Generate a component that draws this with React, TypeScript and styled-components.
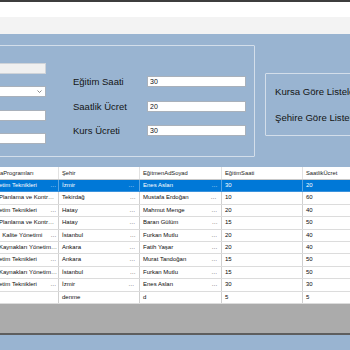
import React from 'react';
import styled, {createGlobalStyle} from 'styled-components';

// WinForms-style "kurs" form: field groups on top, data grid below.

const GlobalStyle = createGlobalStyle`
  html, body {
    margin: 0;
    padding: 0;
    width: 350px;
    height: 350px;
    overflow: hidden;
    background: #99b4d1;
    font-family: 'Liberation Sans', Arial, sans-serif;
  }
`;

// ── Window chrome ──────────────────────────────────────────────────

const Window = styled.div`
  display: flex;
  flex-direction: column;
  width: 350px;
  height: 350px;
  background: #99b4d1;
  overflow: hidden;
`;

const TopEdge = styled.div`
  height: 2px;
  background: #3e3e3e;
  flex-shrink: 0;
`;

const TitleBar = styled.div`
  height: 15px;
  background: #ffffff;
  flex-shrink: 0;
`;

const MenuStrip = styled.div`
  height: 17px;
  background: #f3f3f3;
  flex-shrink: 0;
`;

const Content = styled.div`
  display: flex;
  flex-direction: column;
  padding-top: 11px;
`;

// ── Group boxes ────────────────────────────────────────────────────

const TopRow = styled.div`
  display: flex;
  align-items: flex-start;
  gap: 10px;
`;

const GroupBox = styled.div`
  box-sizing: border-box;
  flex-shrink: 0;
  border: 1px solid #d3deea;
  border-radius: 1px;
`;

const FieldsGroup = styled(GroupBox)`
  display: flex;
  margin-left: -10px;
  width: 265px;
  height: 112px;
  padding-left: 5px;
`;

const ListGroup = styled(GroupBox)`
  display: flex;
  flex-direction: column;
  gap: 15px;
  margin-top: 28px;
  width: 130px;
  height: 63px;
  padding: 12px 0 0 9px;
`;

const LeftFields = styled.div`
  display: flex;
  flex-direction: column;
  gap: 12.4px;
  width: 50px;
  flex-shrink: 0;
  padding-top: 17px;
`;

const TextBox = styled.input<{$muted?: boolean; $width?: number}>`
  box-sizing: border-box;
  display: block;
  width: ${p => p.$width ?? 50}px;
  height: 11px;
  margin: 0;
  padding: 0 2px;
  border: 1px solid ${p => (p.$muted ? '#cfd3d8' : '#a9b1bb')};
  background: ${p => (p.$muted ? '#f0f0f0' : '#ffffff')};
  font-family: 'Liberation Sans', Arial, sans-serif;
  font-size: 7px;
  color: #111;
  outline: none;
`;

const ComboBox = styled.div`
  box-sizing: border-box;
  display: flex;
  align-items: center;
  justify-content: flex-end;
  width: 50px;
  height: 11px;
  padding-right: 3px;
  border: 1px solid #a9b1bb;
  background: #ffffff;
`;

const RightFields = styled.div`
  display: grid;
  grid-template-columns: 74px 99px;
  row-gap: 13.6px;
  align-items: center;
  margin-left: 27px;
  padding-top: 30px;
  align-self: flex-start;
  flex-shrink: 0;
`;

const FieldLabel = styled.span`
  font-size: 9.5px;
  color: #141414;
  white-space: nowrap;
  line-height: 11px;
`;

const ListLabel = styled(FieldLabel)`
  font-size: 9.6px;
`;

// ── Data grid ──────────────────────────────────────────────────────

const COLS = '63px 81px 82px 81px 82px';

const Grid = styled.div`
  box-sizing: border-box;
  display: flex;
  flex-direction: column;
  margin: 10px 0 0 -4px;
  width: 392px;
  height: 168px;
  background: #ababab;
  border-bottom: 2px solid #5e5e5e;
`;

const HeaderRow = styled.div`
  display: grid;
  grid-template-columns: ${COLS};
  height: 13px;
  box-sizing: border-box;
  background: #ffffff;
  border-bottom: 1px solid #c9c9c9;
`;

const HeaderCell = styled.div`
  box-sizing: border-box;
  padding: 0 4px 0 3px;
  border-right: 1px solid #e2e2e2;
  font-size: 5.8px;
  line-height: 12px;
  color: #1a1a1a;
  white-space: nowrap;
  overflow: hidden;

  &:first-child {
    padding-left: 4px;
  }
`;

const DataRow = styled.div<{$selected?: boolean}>`
  display: grid;
  grid-template-columns: ${COLS};
  height: 12.4px;
  box-sizing: border-box;
  background: ${p => (p.$selected ? '#0078d7' : '#ffffff')};
  color: ${p => (p.$selected ? '#ffffff' : '#0c0c0c')};
  border-bottom: 1px solid ${p => (p.$selected ? '#3c93dd' : '#dcdcdc')};
`;

const Cell = styled.div<{$selected?: boolean}>`
  box-sizing: border-box;
  padding: 0 3px;
  border-right: 1px solid ${p => (p.$selected ? '#5aa5e3' : '#d0d0d0')};
  font-size: 6px;
  line-height: 11.4px;
  white-space: pre;
  overflow: hidden;
  text-overflow: ellipsis;

  &:first-child {
    padding-right: 1px;
  }
`;

// ── Data ───────────────────────────────────────────────────────────

const pad = (s: string) => s + ' '.repeat(40);

const headers = ['aProgramları', 'Şehir', 'EğitmenAdSoyad', 'EğitimSaati', 'SaatlikÜcret'];

const rows: string[][] = [
  ['etim Teknikleri', 'İzmir', 'Enes Aslan', '30', '20'],
  ['Planlama ve Kontrolü', 'Tekirdağ', 'Mustafa Erdoğan', '10', '60'],
  ['etim Teknikleri', 'Hatay', 'Mahmut Menge', '20', '40'],
  ['Planlama ve Kontrolü', 'Hatay', 'Baran Gülüm', '15', '50'],
  ['  Kalite Yönetimi', 'İstanbul', 'Furkan Mutlu', '20', '40'],
  ['Kaynakları Yönetimi', 'Ankara', 'Fatih Yaşar', '20', '40'],
  ['etim Teknikleri', 'Ankara', 'Murat Tandoğan', '15', '50'],
  ['Kaynakları Yönetimi', 'İstanbul', 'Furkan Mutlu', '15', '50'],
  ['etim Teknikleri', 'İzmir', 'Enes Aslan', '30', '30'],
];

const lastRow = ['', 'denme', 'd', '5', '5'];

const Chevron = () => (
  <svg width="5" height="3" viewBox="0 0 5 3">
    <path d="M0.5 0.5 L2.5 2.5 L4.5 0.5" fill="none" stroke="#6d6d6d" strokeWidth="0.8" />
  </svg>
);

// ── Component ──────────────────────────────────────────────────────

export default function App() {
  return (
    <>
      <GlobalStyle />
      <Window>
        <TopEdge />
        <TitleBar />
        <MenuStrip />
        <Content>
          <TopRow>
            <FieldsGroup>
              <LeftFields>
                <TextBox $muted readOnly defaultValue="" />
                <ComboBox>
                  <Chevron />
                </ComboBox>
                <TextBox readOnly defaultValue="" />
                <TextBox readOnly defaultValue="" />
              </LeftFields>
              <RightFields>
                <FieldLabel>Eğitim Saati</FieldLabel>
                <TextBox $width={99} readOnly defaultValue="30" />
                <FieldLabel>Saatlik Ücret</FieldLabel>
                <TextBox $width={99} readOnly defaultValue="20" />
                <FieldLabel>Kurs Ücreti</FieldLabel>
                <TextBox $width={99} readOnly defaultValue="30" />
              </RightFields>
            </FieldsGroup>
            <ListGroup>
              <ListLabel>Kursa Göre Listele</ListLabel>
              <ListLabel>Şehire Göre Listele</ListLabel>
            </ListGroup>
          </TopRow>

          <Grid>
            <HeaderRow>
              {headers.map(h => (
                <HeaderCell key={h}>{h}</HeaderCell>
              ))}
            </HeaderRow>
            {rows.map((r, i) => (
              <DataRow key={i} $selected={i === 0}>
                {r.map((v, j) => (
                  <Cell key={j} $selected={i === 0}>
                    {pad(v)}
                  </Cell>
                ))}
              </DataRow>
            ))}
            <DataRow>
              {lastRow.map((v, j) => (
                <Cell key={j}>{v}</Cell>
              ))}
            </DataRow>
          </Grid>
        </Content>
      </Window>
    </>
  );
}
